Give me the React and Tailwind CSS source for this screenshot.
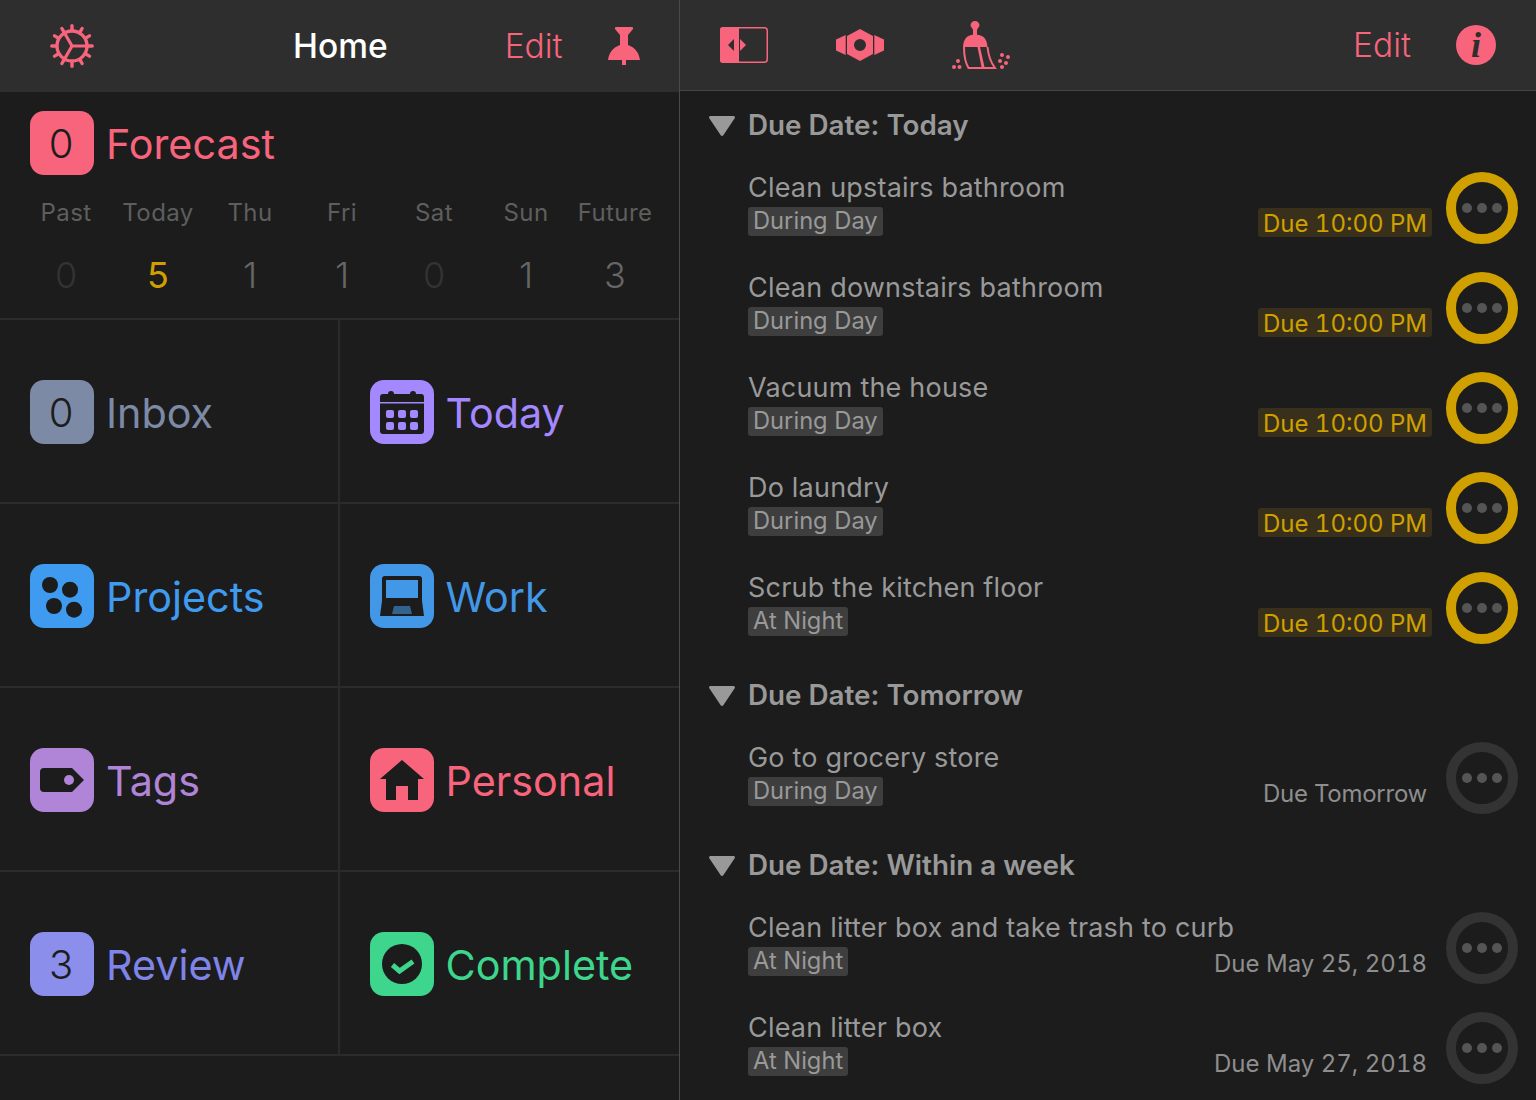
const pink = '#f7647c';

function Gear() {
  const teeth = Array.from({ length: 12 }, (_, i) => i * 30);
  return (
    <svg width="44" height="44" viewBox="0 0 44 44" fill="none" stroke={pink} strokeLinecap="round">
      <circle cx="22" cy="22" r="15" strokeWidth="3.4" />
      {teeth.map((a) => (
        <line key={a} x1="22" y1="6" x2="22" y2="1.8" strokeWidth="3.4" transform={`rotate(${a} 22 22)`} />
      ))}
      <path d="M22 22H37M22 22L14.5 9M22 22L14.5 35" strokeWidth="3.2" />
    </svg>
  );
}

function Pin() {
  return (
    <svg width="32" height="38" viewBox="0 0 32 38" fill={pink}>
      <path d="M7 1a1 1 0 0 1 1-1h16a1 1 0 0 1 1 1v1l-5 6v10c6 2 11 7 12 15H18v5h-4v-5H0c1-8 6-13 12-15V8L7 2z" />
    </svg>
  );
}

function SidebarIcon() {
  return (
    <svg width="48" height="36" viewBox="0 0 48 36">
      <rect x="0.75" y="0.75" width="46.5" height="34.5" rx="3" fill="none" stroke={pink} strokeWidth="1.5" />
      <path d="M3 0h16v36H3a3 3 0 0 1-3-3V3a3 3 0 0 1 3-3z" fill={pink} />
      <path d="M8 18l6-6v12z" fill="#2e2e2e" />
      <path d="M20 12l6 6-6 6z" fill={pink} />
    </svg>
  );
}

function HexIcon() {
  return (
    <svg width="48" height="32" viewBox="0 0 48 32" fill={pink}>
      <path d="M0 10.5L9.7 6v20L0 21.5z" />
      <path d="M48 10.5L38.3 6v20L48 21.5z" />
      <path fillRule="evenodd" d="M24 0l13 7v18l-13 7-13-7V7zM24 10a6 6 0 1 0 0 12 6 6 0 0 0 0-12z" />
    </svg>
  );
}

function Broom() {
  return (
    <svg width="58" height="48" viewBox="0 0 58 48" fill={pink}>
      <path d="M23 0c2.500 0 4.500 2 4.500 4.300 0 2-2.500 3-2.500 5v4.500c6 .5 10 3.500 10.500 12.200H11c.5-8.700 4.500-11.700 10-12.200V9.300c0-2-2.500-3-2.500-5C18.500 2 20.500 0 23 0z" />
      <path d="M12 26c0 8 1.500 16 4.500 21H43c-3-4-6.500-11-7.500-21" fill="none" stroke={pink} strokeWidth="2" />
      <path d="M25.500 26h2.500l4.500 20h-3z" />
      <circle cx="6" cy="40" r="2" />
      <circle cx="2" cy="46" r="2" />
      <circle cx="7.500" cy="46" r="2" />
      <circle cx="50" cy="34" r="2" />
      <circle cx="56" cy="36" r="2" />
      <circle cx="48" cy="40" r="2" />
      <circle cx="54" cy="42" r="2" />
      <circle cx="50" cy="46" r="2" />
    </svg>
  );
}

function TodayGlyph() {
  const cells = [[6, 20], [18, 20], [30, 20], [6, 32], [18, 32], [30, 32]];
  return (
    <svg width="44" height="44" viewBox="0 0 44 44">
      <path d="M0 7a3 3 0 0 1 3-3h5a3 3 0 0 1 6 0h16a3 3 0 0 1 6 0h5a3 3 0 0 1 3 3v34a3 3 0 0 1-3 3H3a3 3 0 0 1-3-3z" fill="#1c1c1c" />
      <rect x="0" y="12" width="44" height="1.500" fill="#a488ff" />
      {cells.map(([x, y]) => (
        <rect key={`${x}-${y}`} x={x} y={y} width="8" height="8" rx="2" fill="#a488ff" />
      ))}
    </svg>
  );
}

function ProjectsGlyph() {
  return (
    <svg width="44" height="44" viewBox="0 0 44 44" fill="#1c1c1c">
      <circle cx="10" cy="11" r="8" />
      <circle cx="30" cy="15.700" r="8" />
      <circle cx="14" cy="32" r="8" />
      <circle cx="34" cy="35.700" r="8" />
    </svg>
  );
}

function WorkGlyph() {
  return (
    <svg width="44" height="40" viewBox="0 0 44 40">
      <path d="M2 3a3 3 0 0 1 3-3h34a3 3 0 0 1 3 3v22l2 15H0l2-15z" fill="#1c1c1c" />
      <rect x="6" y="4" width="32" height="18" fill="#4297e6" />
      <path d="M14 30h16l2 8H12z" fill="#33628c" />
    </svg>
  );
}

function TagGlyph() {
  return (
    <svg width="44" height="24" viewBox="0 0 44 24">
      <path d="M4 0h28l12 12-12 12H4a4 4 0 0 1-4-4V4a4 4 0 0 1 4-4z" fill="#1c1c1c" />
      <circle cx="29" cy="12" r="5" fill="#b084d6" />
    </svg>
  );
}

function HouseGlyph() {
  return (
    <svg width="44" height="40" viewBox="0 0 44 40" fill="#1c1c1c">
      <path d="M22 0L44 19H38V40H28V26H16V40H6V19H0z" />
    </svg>
  );
}

function CheckGlyph() {
  return (
    <svg width="40" height="40" viewBox="0 0 40 40">
      <circle cx="20" cy="20" r="20" fill="#1c1c1c" />
      <path d="M10.500 21l7 6 13.500-9.500" fill="none" stroke="#3dd68c" strokeWidth="5" />
    </svg>
  );
}

function Tile({ bg, children }) {
  return (
    <div className={`w-16 h-16 rounded-[14px] flex items-center justify-center shrink-0 ${bg}`}>
      {children}
    </div>
  );
}

function Count({ n }) {
  return <span className="pr-[2px] pt-[1px] text-[40px] leading-none font-light text-[#1c1c1c]">{n}</span>;
}

function Cell({ tile, label, color, right }) {
  return (
    <div className={`h-[184px] pt-[60px] pl-[30px] border-b-2 border-[#2b2b2b] ${right ? '' : 'border-r-2'}`}>
      <div className="flex items-start gap-3">
        {tile}
        <span className={`text-[41.300px] leading-[66px] ${color}`}>{label}</span>
      </div>
    </div>
  );
}

const forecast = [
  { day: 'Past', n: '0', color: 'text-[#333333] font-light' },
  { day: 'Today', n: '5', color: 'text-[#cfa000] font-normal' },
  { day: 'Thu', n: '1', color: 'text-[#666666] font-light' },
  { day: 'Fri', n: '1', color: 'text-[#666666] font-light' },
  { day: 'Sat', n: '0', color: 'text-[#333333] font-light' },
  { day: 'Sun', n: '1', color: 'text-[#666666] font-light' },
  { day: 'Future', n: '3', color: 'text-[#666666] font-light' },
];

function Task({ title, tag, due, soon, tight }) {
  return (
    <div className="h-[100px] flex items-start pl-[68px]">
      <div className="flex-1 min-w-0 pt-[13px] whitespace-nowrap">
        <div className="text-[27px] leading-[34px] tracking-[0.2px] text-[#999999]">{title}</div>
        <div className="mt-[2px]">
          <span className="inline-block h-[29px] px-[5px] rounded-[3px] bg-[#3e3e3e] text-[23.700px] leading-[28px] text-[#999999]">{tag}</span>
        </div>
      </div>
      <div className={`mt-[50px] mr-[14px] h-[29px] px-[5px] rounded-[3px] text-[24px] leading-[32px] whitespace-nowrap tabular-nums ${tight ? 'tracking-[-0.25px]' : ''} ${soon ? 'bg-[#38301a] text-[#cfa000]' : 'text-[#8e8e8e]'}`}>
        {due}
      </div>
      <div className={`mt-[14px] mr-[18px] w-[72px] h-[72px] rounded-full border-[10px] flex items-center justify-center gap-[5px] shrink-0 ${soon ? 'border-[#cfa000]' : 'border-[#333333]'}`}>
        <span className="w-[10px] h-[10px] rounded-full bg-[#555555]" />
        <span className="w-[10px] h-[10px] rounded-full bg-[#555555]" />
        <span className="w-[10px] h-[10px] rounded-full bg-[#555555]" />
      </div>
    </div>
  );
}

function Section({ title, first }) {
  return (
    <div className={`flex items-center pl-[29px] gap-[13px] ${first ? 'h-[67px] pt-[2px]' : 'h-[70px] pt-[5px]'}`}>
      <svg width="26" height="20" viewBox="0 0 26 20" className="shrink-0">
        <path d="M1.500 0h23c1.200 0 1.800 1.300 1.200 2.300L14.300 19.200c-.6.900-2 .9-2.600 0L.3 2.300C-.3 1.300.3 0 1.500 0z" fill="#999999" />
      </svg>
      <span className="text-[27.800px] leading-none font-semibold text-[#999999]">{title}</span>
    </div>
  );
}

export default function App() {
  return (
    <div className="w-[1536px] h-[1100px] overflow-hidden flex bg-[#1c1c1c] font-['Inter',sans-serif]">
      <div className="w-[680px] shrink-0 border-r border-[#4a4a4a]">
        <div className="h-[92px] bg-[#2e2e2e] flex items-center">
          <div className="ml-[50px] w-[44px] flex"><Gear /></div>
          <span className="ml-[199px] text-[33.500px] font-medium text-white">Home</span>
          <span className="ml-[117px] text-[33.500px] font-light text-[#f7647c]">Edit</span>
          <div className="ml-[45px] flex"><Pin /></div>
        </div>

        <div className="h-[228px] border-b-2 border-[#2b2b2b]">
          <div className="pt-[19px] pl-[30px] flex items-start gap-3">
            <Tile bg="bg-[#f7647c]"><Count n="0" /></Tile>
            <span className="text-[41.300px] leading-[66px] text-[#f7647c]">Forecast</span>
          </div>
          <div className="grid grid-cols-[repeat(6,92px)_86px] ml-5 mt-[21px] text-center">
            {forecast.map((f) => (
              <div key={f.day}>
                <div className="text-[24px] leading-[30px] tracking-[0.4px] text-[#5e5e5e]">{f.day}</div>
                <div className={`mt-[25px] text-[36px] leading-[44px] ${f.color}`}>{f.n}</div>
              </div>
            ))}
          </div>
        </div>

        <div className="grid grid-cols-2">
          <Cell tile={<Tile bg="bg-[#7c8aa5]"><Count n="0" /></Tile>} label="Inbox" color="text-[#7c8aa5]" />
          <Cell right tile={<Tile bg="bg-[#a488ff]"><TodayGlyph /></Tile>} label="Today" color="text-[#a488ff]" />
          <Cell tile={<Tile bg="bg-[#3f9bf0]"><ProjectsGlyph /></Tile>} label="Projects" color="text-[#3f9bf0]" />
          <Cell right tile={<Tile bg="bg-[#4297e6]"><WorkGlyph /></Tile>} label="Work" color="text-[#4297e6]" />
          <Cell tile={<Tile bg="bg-[#b084d6]"><TagGlyph /></Tile>} label="Tags" color="text-[#b084d6]" />
          <Cell right tile={<Tile bg="bg-[#f7647c]"><HouseGlyph /></Tile>} label="Personal" color="text-[#f7647c]" />
          <Cell tile={<Tile bg="bg-[#8b8eeb]"><Count n="3" /></Tile>} label="Review" color="text-[#7f84e8]" />
          <Cell right tile={<Tile bg="bg-[#3dd68c]"><CheckGlyph /></Tile>} label="Complete" color="text-[#3dd68c]" />
        </div>
      </div>

      <div className="flex-1 min-w-0">
        <div className="h-[91px] bg-[#2e2e2e] border-b border-[#444444] flex items-center">
          <div className="ml-10 flex"><SidebarIcon /></div>
          <div className="ml-[68px] flex"><HexIcon /></div>
          <div className="ml-[68px] flex"><Broom /></div>
          <span className="ml-auto text-[33.500px] font-light text-[#f7647c]">Edit</span>
          <div className="ml-[45px] mr-10 w-10 h-10 rounded-full bg-[#f7647c] flex items-center justify-center">
            <span className="font-['Liberation_Serif',serif] italic font-bold text-[36px] leading-none text-[#2e2e2e]">i</span>
          </div>
        </div>

        <Section first title="Due Date: Today" />
        <Task title="Clean upstairs bathroom" tag="During Day" due="Due 10:00 PM" soon />
        <Task title="Clean downstairs bathroom" tag="During Day" due="Due 10:00 PM" soon />
        <Task title="Vacuum the house" tag="During Day" due="Due 10:00 PM" soon />
        <Task title="Do laundry" tag="During Day" due="Due 10:00 PM" soon />
        <Task title="Scrub the kitchen floor" tag="At Night" due="Due 10:00 PM" soon />
        <Section title="Due Date: Tomorrow" />
        <Task title="Go to grocery store" tag="During Day" due="Due Tomorrow" tight />
        <Section title="Due Date: Within a week" />
        <Task title="Clean litter box and take trash to curb" tag="At Night" due="Due May 25, 2018" />
        <Task title="Clean litter box" tag="At Night" due="Due May 27, 2018" />
      </div>
    </div>
  );
}
